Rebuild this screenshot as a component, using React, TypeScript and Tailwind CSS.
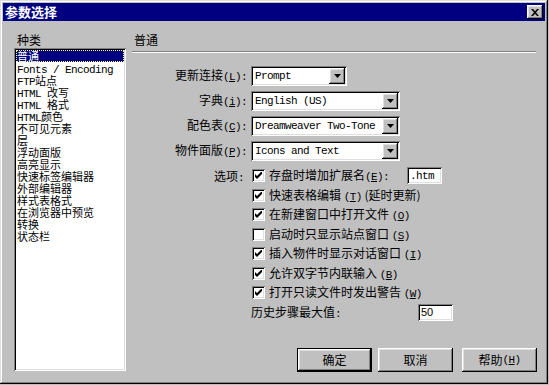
import type { ReactNode } from "react";

const windowBevel =
  "shadow-[inset_-1px_-1px_#000,inset_1px_1px_#dfdfdf,inset_-2px_-2px_#808080,inset_2px_2px_#fff]";
const raised =
  "shadow-[inset_-1px_-1px_#000,inset_1px_1px_#fff,inset_-2px_-2px_#808080,inset_2px_2px_#dfdfdf]";
const sunken =
  "shadow-[inset_1px_1px_#808080,inset_-1px_-1px_#fff,inset_2px_2px_#000,inset_-2px_-2px_#dfdfdf]";
const mono = "font-['Liberation_Mono',monospace] text-[11px] tracking-[-0.6px]";

const M = ({ children }: { children: ReactNode }) => (
  <span className={mono}>{children}</span>
);

const Key = ({ k, colon }: { k: string; colon?: boolean }) => (
  <span className={mono}>
    (<span className="underline">{k}</span>){colon ? ":" : ""}
  </span>
);

const categories: ReactNode[] = [
  "普通",
  <M>Fonts / Encoding</M>,
  <>
    <M>FTP</M>站点
  </>,
  <>
    <M>HTML </M>改写
  </>,
  <>
    <M>HTML </M>格式
  </>,
  <>
    <M>HTML</M>颜色
  </>,
  "不可见元素",
  "层",
  "浮动面版",
  "高亮显示",
  "快速标签编辑器",
  "外部编辑器",
  "样式表格式",
  "在浏览器中预览",
  "转换",
  "状态栏",
];

const Select = ({ value, wide }: { value: string; wide?: boolean }) => (
  <div
    className={`${sunken} bg-white h-[20px] flex items-center pl-[4px] pr-[2px] ${
      wide ? "w-[149px]" : "w-[96px]"
    }`}
  >
    <span className={`${mono} flex-1 whitespace-nowrap`}>{value}</span>
    <div
      className={`${raised} bg-[#c0c0c0] w-[16px] h-[16px] flex items-center justify-center`}
    >
      <svg width="7" height="4" viewBox="0 0 7 4">
        <path d="M0 0h7L3.5 4z" fill="#000" />
      </svg>
    </div>
  </div>
);

const Check = ({ on }: { on: boolean }) => (
  <div
    className={`${sunken} bg-white w-[13px] h-[13px] shrink-0 flex items-center justify-center`}
  >
    {on && (
      <svg width="7" height="7" viewBox="0 0 7 7">
        <path d="M0 2L2 4L7 -1L7 2L2 7L0 5Z" fill="#000" />
      </svg>
    )}
  </div>
);

const Button = ({ children, def }: { children: ReactNode; def?: boolean }) => (
  <div className={`w-[75px] h-[24px] ${def ? "border border-black" : ""}`}>
    <div
      className={`${raised} bg-[#c0c0c0] w-full h-full flex items-center justify-center leading-none`}
    >
      {children}
    </div>
  </div>
);

const options: { on: boolean; label: ReactNode }[] = [
  { on: true, label: <>快速表格编辑 <Key k="T" /> (延时更新)</> },
  { on: true, label: <>在新建窗口中打开文件 <Key k="O" /></> },
  { on: false, label: <>启动时只显示站点窗口 <Key k="S" /></> },
  { on: true, label: <>插入物件时显示对话窗口 <Key k="I" /></> },
  { on: true, label: <>允许双字节内联输入 <Key k="B" /></> },
  { on: true, label: <>打开只读文件时发出警告 <Key k="W" /></> },
];

export default function App() {
  return (
    <div className="w-[549px] h-[385px] bg-[#c0c0c0] font-['Noto_Sans_CJK_SC',sans-serif] text-[12px] text-black">
      <div className={`w-[548px] h-[384px] p-[3px] flex flex-col ${windowBevel}`}>
        <div className="h-[18px] bg-[#000080] flex items-center justify-between px-[2px]">
          <span className="text-white font-bold text-[13px] leading-[18px]">参数选择</span>
          <div
            className={`${raised} bg-[#c0c0c0] w-[16px] h-[14px] flex items-center justify-center`}
          >
            <svg width="8" height="7" viewBox="0 0 8 7">
              <path
                d="M0 0h2l2 2.2L6 0h2L5 3.5 8 7H6L4 4.8 2 7H0l3-3.5z"
                fill="#000"
              />
            </svg>
          </div>
        </div>

        <div className="flex pt-[10px] pl-[11px]">
          <div className="w-[112px] flex flex-col">
            <div className="h-[17px] leading-[17px] pl-[3px]">种类</div>
            <div className={`${sunken} bg-white h-[323px] p-[2px]`}>
              {categories.map((c, i) => (
                <div
                  key={i}
                  className={`h-[12px] leading-[12px] text-[11px] pl-[1px] whitespace-nowrap ${
                    i === 0
                      ? "bg-[#000080] text-white outline-1 outline-dotted outline-[#ffff80] -outline-offset-1"
                      : ""
                  }`}
                >
                  {c}
                </div>
              ))}
            </div>
          </div>

          <div className="ml-[6px] w-[405px] flex flex-col">
            <div className="h-[17px] leading-[17px] pl-[2px]">普通</div>
            <div className="mt-[3px] w-[404px] border-t border-t-[#808080] border-b border-b-white" />

            <div className="mt-[13px] flex flex-col gap-[5px]">
              <div className="flex items-center h-[20px]">
                <div className="w-[117px] text-right pr-[2px]">
                  更新连接<Key k="L" colon />
                </div>
                <div className="ml-[2px]">
                  <Select value="Prompt" />
                </div>
              </div>
              <div className="flex items-center h-[20px]">
                <div className="w-[117px] text-right pr-[2px]">
                  字典<Key k="i" colon />
                </div>
                <div className="ml-[2px]">
                  <Select value="English (US)" wide />
                </div>
              </div>
              <div className="flex items-center h-[20px]">
                <div className="w-[117px] text-right pr-[2px]">
                  配色表<Key k="C" colon />
                </div>
                <div className="ml-[2px]">
                  <Select value="Dreamweaver Two-Tone" wide />
                </div>
              </div>
              <div className="flex items-center h-[20px]">
                <div className="w-[117px] text-right pr-[2px]">
                  物件面版<Key k="P" colon />
                </div>
                <div className="ml-[2px]">
                  <Select value="Icons and Text" wide />
                </div>
              </div>
            </div>

            <div className="mt-[5px] flex">
              <div className="w-[117px] text-right pr-[5px] leading-[19.5px]">
                选项<M>:</M>
              </div>
              <div className="ml-[3px] flex flex-col">
                <div className="h-[19.5px] flex items-center gap-[4px]">
                  <Check on />
                  <span className="w-[134px] whitespace-nowrap">
                    存盘时增加扩展名<Key k="E" colon />
                  </span>
                  <div
                    className={`${sunken} bg-white w-[35px] h-[17px] flex items-center pl-[3px]`}
                  >
                    <M>.htm</M>
                  </div>
                </div>
                {options.map((o, i) => (
                  <div key={i} className="h-[19.5px] flex items-center gap-[4px]">
                    <Check on={o.on} />
                    <span className="whitespace-nowrap">{o.label}</span>
                  </div>
                ))}
                <div className="h-[19.5px] flex items-center gap-[4px] -ml-[1px]">
                  <span className="w-[163px]">
                    历史步骤最大值<M>:</M>
                  </span>
                  <div
                    className={`${sunken} bg-white w-[35px] h-[17px] flex items-center pl-[3px] font-['Liberation_Sans',sans-serif] text-[11px]`}
                  >
                    50
                  </div>
                </div>
              </div>
            </div>

            <div className="mt-[26px] flex">
              <div className="ml-[165px]">
                <Button def>确定</Button>
              </div>
              <div className="ml-[6px]">
                <Button>取消</Button>
              </div>
              <div className="ml-[9px]">
                <Button>
                  帮助 <Key k="H" />
                </Button>
              </div>
            </div>
          </div>
        </div>
      </div>
    </div>
  );
}
